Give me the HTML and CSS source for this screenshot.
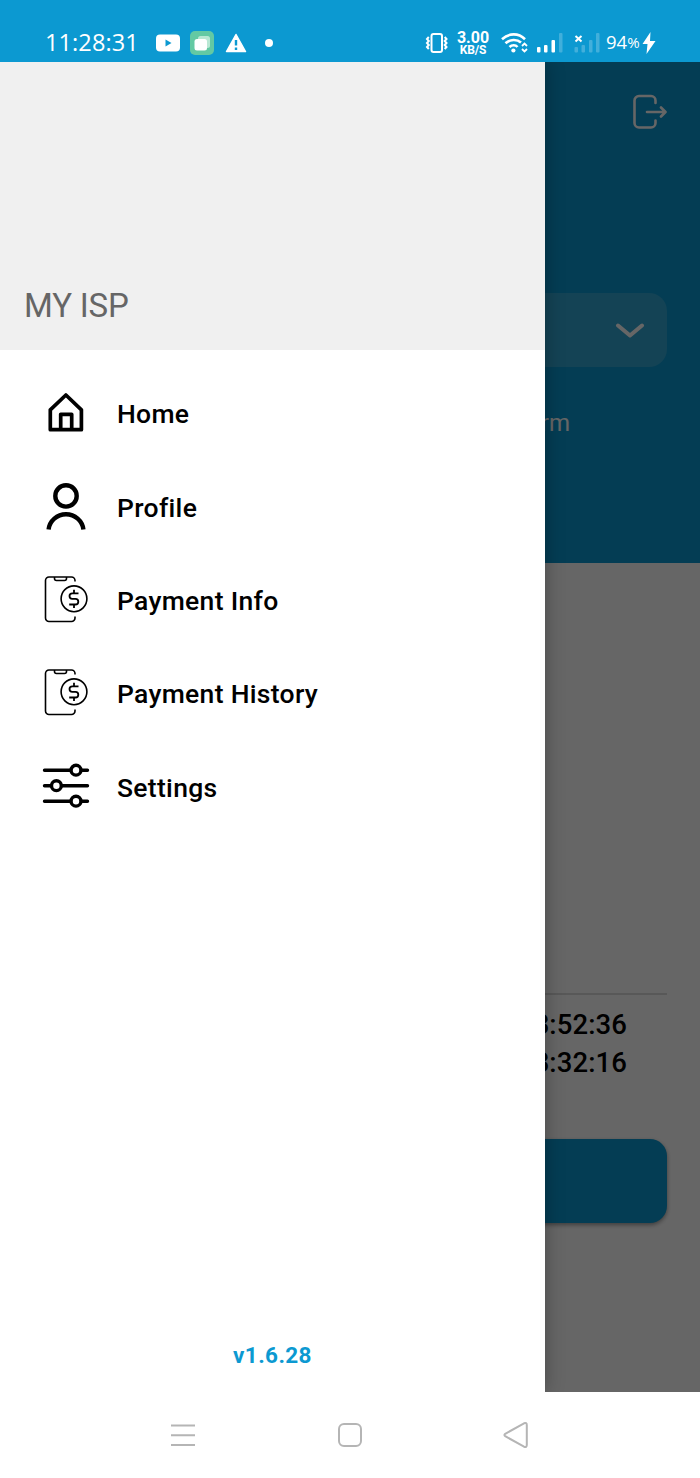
FILE: index.html
```
<!DOCTYPE html>
<html lang="en">
<head>
    <meta charset="UTF-8">
    <meta name="viewport" content="width=device-width, initial-scale=1.0">
    <title>MY ISP</title>
    <link rel="stylesheet" href="styles.css">
</head>
<body>
    <div class="phone">
        <header class="status-bar">
            <div class="status-left">
                <span class="clock">11:28:31</span>
                <svg class="icon-video" width="24" height="18" viewBox="0 0 24 18"><rect x="0" y="0.5" width="24" height="17" rx="4" fill="#fff"/><path d="M9.5 5.5v7l6-3.5z" fill="#0c99d1"/></svg>
                <svg class="icon-app" width="24" height="24" viewBox="0 0 24 24"><rect width="24" height="24" rx="5" fill="#63c9a3"/><rect x="8" y="5" width="12" height="12" rx="2.5" fill="#b9e8d4"/><rect x="4.5" y="8" width="12.5" height="11.5" rx="2.5" fill="#fff"/></svg>
                <svg class="icon-warn" width="22" height="20" viewBox="0 0 22 20"><path d="M11 1.5 20.5 18.5h-19z" fill="#fff" stroke="#fff" stroke-width="1.5" stroke-linejoin="round"/><path d="M11 7v5.5M11 14.5v2.5" stroke="#0c99d1" stroke-width="2.4"/></svg>
                <span class="dot"></span>
            </div>
            <div class="status-right">
                <svg width="24" height="22" viewBox="0 0 24 22" fill="none" stroke="#fff"><rect x="6.5" y="2" width="10.5" height="18" rx="2" stroke-width="2"/><path d="M3.800 5 2 7l1.800 2L2 11l1.800 2L2 15l1.800 2M19.700 5l1.800 2-1.800 2 1.800 2-1.800 2 1.800 2-1.800 2" stroke-width="2"/></svg>
                <div class="net-speed"><span class="net-value">3.00</span><span class="net-unit">KB/S</span></div>
                <svg class="icon-wifi" width="28" height="22" viewBox="0 0 28 22" fill="none" stroke="#fff"><path d="M1 7.2C8 .8 17.500 .8 24 7.2M4.500 11.300c4.500-4.300 11.500-4.300 15.500-.8M8.500 15c2.500-2.400 6-2.400 8 0" stroke-width="2.6"/><circle cx="12.4" cy="18.5" r="2.1" fill="#fff" stroke="none"/><path d="M21 14l2.500-2.500L26 14M21 17l2.500 2.500L26 17" stroke-width="1.8"/></svg>
                <svg class="icon-signal" width="26" height="20" viewBox="0 0 26 20" fill="#fff"><rect x="0" y="14" width="3.5" height="5.5" rx="1"/><rect x="7" y="12" width="3.5" height="7.5" rx="1"/><rect x="14.5" y="7" width="3.5" height="12.5" rx="1"/><rect x="22" y="0" width="3.5" height="19.5" rx="1" opacity="0.22"/></svg>
                <svg class="icon-nosim" width="26" height="20" viewBox="0 0 26 20" fill="#fff"><path d="M1.500 3l6 5.500M7.500 3l-6 5.500" stroke="#fff" stroke-width="2"/><g opacity="0.22"><rect x="0.5" y="14" width="3.5" height="5.5" rx="1"/><rect x="7.5" y="12" width="3.5" height="7.5" rx="1"/><rect x="15" y="7" width="3.5" height="12.5" rx="1"/><rect x="22" y="0" width="3.5" height="19.5" rx="1"/></g></svg>
                <span class="battery">94<small>%</small></span>
                <svg class="icon-bolt" width="14" height="22" viewBox="0 0 14 22"><path d="M8.500 0 .500 12h5L4.500 22 13.500 9H8z" fill="#fff"/></svg>
            </div>
        </header>

        <main class="screen">
            <!-- page under the drawer -->
            <div class="page">
                <section class="hero">
                    <svg class="logout" width="35" height="36" viewBox="0 0 35 36" fill="none" stroke="#fff" stroke-width="2.6" stroke-linecap="round" stroke-linejoin="round"><path d="M23.500 9V6.500a4.500 4.500 0 0 0-4.500-4.500H7a4.500 4.500 0 0 0-4.500 4.500v22.500A4.500 4.500 0 0 0 7 33.500h12a4.500 4.500 0 0 0 4.500-4.500V26.500M15 18h18M29 13.500l4.500 4.500-4.500 4.500"/></svg>
                    <div class="select">
                        <svg width="30" height="16" viewBox="0 0 30 16" fill="none" stroke="#fff" stroke-width="4" stroke-linecap="round" stroke-linejoin="round"><path d="M3 3.500l12 10L27 3.500"/></svg>
                    </div>
                    <p class="hero-text">rm</p>
                </section>
                <section class="usage">
                    <div class="times">
                        <p>3:52:36</p>
                        <p>3:32:16</p>
                    </div>
                    <div class="action"></div>
                </section>
            </div>
            <div class="scrim"></div>

            <aside class="drawer">
                <div class="drawer-head"><h1>MY ISP</h1></div>
                <nav class="menu">
                    <div class="menu-item">
                        <svg width="48" height="48" viewBox="0 0 48 48" fill="none" stroke="#000" stroke-width="3.7" stroke-linejoin="round"><path d="M8.300 20.800 23.900 6l15.500 14.800v19.900H8.300zM18.700 40.700V25.300h11v15.400"/></svg>
                        <span>Home</span>
                    </div>
                    <div class="menu-item">
                        <svg width="48" height="48" viewBox="0 0 48 48" fill="none" stroke="#000" stroke-width="4.4"><circle cx="24" cy="12.9" r="10.7"/><path d="M6.600 46.500a17.500 17 0 0 1 34.800 0"/></svg>
                        <span>Profile</span>
                    </div>
                    <div class="menu-item">
                        <svg width="48" height="48" viewBox="0 0 48 48" fill="none" stroke="#000" stroke-width="1.6"><path d="M33 5.500V4.500A3.500 3.500 0 0 0 29.500 1H7A3.500 3.500 0 0 0 3.500 4.500v37.500A3.500 3.500 0 0 0 7 45.500h22.500A3.500 3.500 0 0 0 33 42v-1.500M12.500 1v1.500a2 2 0 0 0 2 2h8a2 2 0 0 0 2-2V1"/><circle cx="32" cy="22.8" r="12.9"/><path d="M36.500 17.300h-6.200a2.800 2.800 0 0 0 0 5.600h3.200a2.800 2.800 0 0 1 0 5.600h-6.300M32 13.800v3.500M32 28.500V32" stroke-width="1.8"/></svg>
                        <span>Payment Info</span>
                    </div>
                    <div class="menu-item">
                        <svg width="48" height="48" viewBox="0 0 48 48" fill="none" stroke="#000" stroke-width="1.6"><path d="M33 5.500V4.500A3.500 3.500 0 0 0 29.500 1H7A3.500 3.500 0 0 0 3.500 4.500v37.500A3.500 3.500 0 0 0 7 45.500h22.500A3.500 3.500 0 0 0 33 42v-1.500M12.500 1v1.500a2 2 0 0 0 2 2h8a2 2 0 0 0 2-2V1"/><circle cx="32" cy="22.8" r="12.9"/><path d="M36.500 17.300h-6.200a2.800 2.800 0 0 0 0 5.600h3.200a2.800 2.800 0 0 1 0 5.600h-6.300M32 13.800v3.500M32 28.500V32" stroke-width="1.8"/></svg>
                        <span>Payment History</span>
                    </div>
                    <div class="menu-item">
                        <svg width="48" height="48" viewBox="0 0 48 48" fill="#fff" stroke="#000" stroke-width="3.4" stroke-linecap="round"><path d="M2.500 7.200h43M2.500 22.700h43M2.500 38.200h43"/><circle cx="34" cy="7.2" r="4.9"/><circle cx="14.4" cy="22.7" r="4.9"/><circle cx="34" cy="38.2" r="4.9"/></svg>
                        <span>Settings</span>
                    </div>
                </nav>
                <p class="version">v1.6.28</p>
            </aside>
        </main>

        <footer class="nav-bar">
            <svg width="26" height="26" viewBox="0 0 26 26" fill="none" stroke="#b5b5b5" stroke-width="2"><path d="M1 3.500h24M1 13.200h24M1 23h24"/></svg>
            <svg width="26" height="26" viewBox="0 0 26 26" fill="none" stroke="#b5b5b5" stroke-width="2"><rect x="2" y="2" width="22" height="22" rx="5"/></svg>
            <svg width="26" height="28" viewBox="0 0 26 28" fill="none" stroke="#b5b5b5" stroke-width="2"><path d="M2.200 12.800 21 2.300q2.800-1 2.800 1.700v20q0 2.700-2.800 1.700L2.200 15.200q-1.600-1.200 0-2.400z"/></svg>
        </footer>
    </div>
</body>
</html>
```
FILE: styles.css
```
* { box-sizing: border-box; }
body { margin: 0; font-family: Roboto, "Liberation Sans", sans-serif; background-color: #fff; }
h1, p { margin: 0; }
svg { display: block; flex-shrink: 0; }

.phone { width: 700px; height: 1478px; display: flex; flex-direction: column; overflow: hidden; }

/* status bar */
.status-bar {
    height: 62px;
    flex-shrink: 0;
    padding: 24px 44px 0 45px;
    display: flex;
    justify-content: space-between;
    background-color: #0c99d1;
    color: #fff;
}
.status-left, .status-right { display: flex; align-items: center; height: 38px; }
.clock { width: 111px; padding-bottom: 2px; font-family: "Open Sans", sans-serif; font-size: 23.5px; line-height: 36px; letter-spacing: 0.1px; }
.icon-app { margin-left: 10px; }
.icon-warn { margin-left: 11px; }
.dot { width: 8px; height: 8px; margin-left: 18px; border-radius: 50%; background-color: #fff; }
.net-speed { width: 32px; margin-left: 8px; margin-right: 1px; display: flex; flex-direction: column; align-items: center; font-weight: 700; }
.net-value { font-size: 16px; line-height: 13px; }
.net-unit { font-size: 12px; line-height: 12px; letter-spacing: -0.2px; }
.icon-wifi { margin-left: 11px; }
.icon-signal { margin-left: 8px; }
.icon-nosim { margin-left: 11px; }
.battery { width: 36px; margin-left: 6px; padding-bottom: 2px; font-family: "Open Sans", sans-serif; font-size: 18.5px; line-height: 36px; white-space: nowrap; }
.battery small { font-size: 15px; vertical-align: 1px; }

/* page */
.screen { position: relative; height: 1330px; flex-shrink: 0; overflow: hidden; }
.page { height: 100%; display: flex; flex-direction: column; background-color: #fff; }
.hero {
    height: 501px;
    padding: 32px 33px 0;
    display: flex;
    flex-direction: column;
    background-color: #0c99d1;
    color: #fff;
}
.logout { align-self: flex-end; }
.select {
    height: 74px;
    margin-top: 163px;
    padding-right: 22px;
    display: flex;
    align-items: center;
    justify-content: flex-end;
    border-radius: 18px;
    background-color: #32a8d5;
}
.hero-text { margin: 42px 97px 0 0; font-size: 24px; line-height: 28px; text-align: right; }
.usage { padding: 430px 33px 0; }
.times { padding: 11px 40px 0 0; border-top: 2px solid #ddd; text-align: right; font-size: 27.5px; font-weight: 500; line-height: 38px; letter-spacing: 0.1px; }
.action { height: 84px; margin-top: 57px; border-radius: 17px; background-color: #0c99d1; box-shadow: 0 2px 4px rgba(0, 0, 0, 0.4); }

.scrim { position: absolute; inset: 0; background-color: rgba(0, 0, 0, 0.6); }

/* drawer */
.drawer {
    position: absolute;
    top: 0;
    bottom: 0;
    left: 0;
    width: 545px;
    display: flex;
    flex-direction: column;
    background-color: #fff;
    box-shadow: 0 0 18px rgba(0, 0, 0, 0.3);
}
.drawer-head { height: 288px; padding: 224px 24px 0; background-color: #f0f0f0; }
.drawer-head h1 { font-size: 33px; font-weight: 400; line-height: 40px; letter-spacing: -0.2px; color: #666; }
.menu { padding: 16.6px 42px 0; }
.menu-item { height: 93.4px; display: flex; align-items: center; gap: 27px; font-size: 26.5px; font-weight: 500; letter-spacing: 0.3px; color: #000; }
.menu-item span { padding-top: 1px; }
.version { margin-top: auto; padding-bottom: 23px; text-align: center; font-size: 22.5px; font-weight: 700; line-height: 28px; letter-spacing: 0.4px; color: #0c99d1; }

/* bottom navigation */
.nav-bar { height: 86px; display: flex; align-items: center; justify-content: space-between; padding: 0 171px 0 170px; background-color: #fff; }
```
